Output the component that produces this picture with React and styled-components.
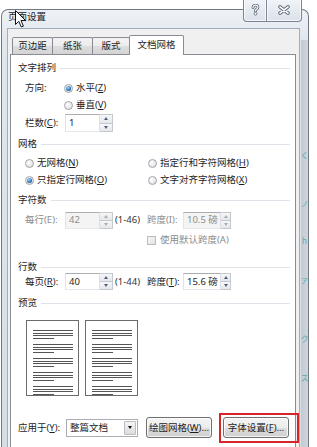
import React from 'react'
import styled, { createGlobalStyle } from 'styled-components'

const GlobalStyle = createGlobalStyle`
  html, body {
    margin: 0;
    padding: 0;
    background: #fff;
  }
  body {
    font-family: "Noto Sans", "Noto Sans CJK SC", sans-serif;
    font-size: 9.5px;
    line-height: 12px;
    color: #1e1e1e;
    overflow: hidden;
  }
`

const Screen = styled.div`
  position: relative;
  width: 317px;
  height: 447px;
  overflow: hidden;
  background: #fff;
  padding: 9px 0 0 1px;
  box-sizing: border-box;
`

const Window = styled.div`
  width: 308px;
  height: 460px;
  box-sizing: border-box;
  border: 1px solid #6e7884;
  border-bottom: none;
  border-radius: 7px 7px 0 0;
  background: linear-gradient(180deg, #eef2f6 0%, #e1e7ee 30px, #d6dde5 100%);
  padding: 0 8px 0 5px;
  display: flex;
  flex-direction: column;
`

const TitleBar = styled.div`
  height: 18px;
  box-sizing: border-box;
  padding: 1px 0 0 1px;
  color: #1b1b1b;
`

const Caption = styled.div`
  position: absolute;
  top: -1px;
  right: 15px;
  display: flex;
`

const CaptionButton = styled.div`
  width: ${p => p.$w}px;
  height: 23px;
  box-sizing: border-box;
  border: 1px solid #7b8591;
  border-top: none;
  margin-left: ${p => (p.$first ? 0 : -1)}px;
  border-radius: ${p => (p.$first ? '0 0 0 4px' : '0 0 4px 0')};
  background: linear-gradient(180deg, #f2f5f9 0%, #e6ebf1 50%, #dbe2ea 100%);
  box-shadow: inset 0 0 0 1px rgba(255, 255, 255, 0.7);
  display: flex;
  align-items: center;
  justify-content: center;
`

/* glass of the right frame lets the document behind show through */
const GlassEdge = styled.div`
  position: absolute;
  left: 301px;
  top: 40px;
  width: 7px;
  height: 407px;
  overflow: hidden;
  background: linear-gradient(90deg, #c4cad1, #cfd5db);
  display: flex;
  flex-direction: column;
  align-items: center;
  font-size: 8px;
  line-height: 9px;
  color: #4aa6a4;
`

const GlassMark = styled.span`
  margin-top: ${p => p.$mt}px;
  opacity: 0.85;
`

const Cursor = styled.svg`
  position: absolute;
  left: 15px;
  top: 10px;
`

const Client = styled.div`
  flex: 1;
  background: #f0f0f0;
  border: 1px solid #a3adb9;
  border-bottom: none;
  padding: 6px 3px 0 2px;
`

const TabRow = styled.div`
  height: 19px;
  display: flex;
  align-items: flex-end;
  padding-left: 3px;
`

const Tab = styled.div`
  position: relative;
  z-index: ${p => (p.$active ? 2 : 1)};
  width: ${p => p.$w}px;
  height: ${p => (p.$active ? 20 : 17)}px;
  margin-left: -1px;
  margin-bottom: ${p => (p.$active ? -1 : 0)}px;
  box-sizing: border-box;
  border: 1px solid #898c95;
  border-bottom: none;
  border-radius: 2px 2px 0 0;
  background: ${p =>
    p.$active
      ? '#fff'
      : 'linear-gradient(180deg, #f3f3f3 0%, #ececec 50%, #dedede 51%, #d3d3d3 100%)'};
  display: flex;
  align-items: center;
  justify-content: center;
  padding-bottom: ${p => (p.$active ? 2 : 0)}px;
  white-space: nowrap;
`

const Panel = styled.div`
  position: relative;
  height: 410px;
  box-sizing: border-box;
  background: #fff;
  border: 1px solid #898c95;
  padding: 7px 5px 0 7px;
`

const Header = styled.div`
  display: flex;
  align-items: center;
  height: 12px;
  margin-top: ${p => p.$mt || 0}px;
  white-space: nowrap;
  &::after {
    content: '';
    flex: 1;
    height: 1px;
    margin-left: 4px;
    background: #dde3e9;
  }
`

const Row = styled.div`
  display: flex;
  align-items: center;
  height: ${p => p.$h || 16}px;
  margin-top: ${p => p.$mt || 0}px;
  padding-left: ${p => p.$indent ?? 7}px;
  white-space: nowrap;
`

const Label = styled.span`
  flex: none;
  width: ${p => (p.$w ? `${p.$w}px` : 'auto')};
  color: ${p => (p.$disabled ? '#8c8c8c' : '#1e1e1e')};
`

const Key = styled.span`
  text-decoration: underline;
`

const Option = styled.span`
  flex: none;
  display: flex;
  align-items: center;
  gap: ${p => p.$gap ?? 3}px;
  width: ${p => (p.$w ? `${p.$w}px` : 'auto')};
  color: ${p => (p.$disabled ? '#8c8c8c' : '#1e1e1e')};
`

const RadioDot = styled.span`
  width: 9px;
  height: 9px;
  box-sizing: border-box;
  border-radius: 50%;
  border: 1px solid #a0a4aa;
  background: radial-gradient(circle at 35% 35%, #ffffff 0%, #e8e8e8 60%, #d0d0d0 100%);
  display: flex;
  align-items: center;
  justify-content: center;
  &::after {
    content: '';
    width: 5px;
    height: 5px;
    border-radius: 50%;
    background: ${p =>
      p.$on ? 'radial-gradient(circle at 40% 35%, #a8def8 0%, #2d76bf 55%, #173f72 100%)' : 'transparent'};
  }
`

const CheckBox = styled.span`
  width: 9px;
  height: 9px;
  box-sizing: border-box;
  border: 1px solid #b9bcc1;
  background: linear-gradient(135deg, #f6f6f6, #e4e4e4);
`

const SpinBox = styled.div`
  flex: none;
  display: flex;
  height: ${p => p.$h}px;
`

const Field = styled.div`
  width: ${p => p.$w}px;
  height: 100%;
  box-sizing: border-box;
  border: 1px solid;
  border-color: #abadb3 #dbdfe6 #e3e9ef #e2e3ea;
  background: ${p => (p.$disabled ? '#f4f4f4' : '#fff')};
  color: ${p => (p.$disabled ? '#8c8c8c' : '#1e1e1e')};
  padding-left: 3px;
  display: flex;
  align-items: center;
  overflow: hidden;
`

const Spinner = styled.div`
  width: ${p => p.$w}px;
  height: 100%;
  box-sizing: border-box;
  border: 1px solid #c4c8cf;
  border-left: none;
  display: flex;
  flex-direction: column;
`

const SpinHalf = styled.div`
  flex: 1;
  background: linear-gradient(180deg, #f7f7f7, #e5e7ea);
  display: flex;
  align-items: center;
  justify-content: center;
  & + & {
    border-top: 1px solid #c4c8cf;
  }
  &::after {
    content: '';
    border-left: 2.5px solid transparent;
    border-right: 2.5px solid transparent;
    ${p => (p.$down ? 'border-top' : 'border-bottom')}: 3px solid ${p => (p.$disabled ? '#a9adb3' : '#4b5f80')};
  }
`

const Range = styled.span`
  flex: none;
  width: ${p => p.$w}px;
  margin-left: 2px;
  color: #333;
`

const Pages = styled.div`
  display: flex;
  gap: 6px;
  margin: 11px 0 0 8px;
`

const Page = styled.div`
  width: 53px;
  height: 76px;
  box-sizing: border-box;
  border: 1px solid #6b6b6b;
  background: #fff;
  padding: 9px 5px 0 6px;
  overflow: hidden;
`

const Para = styled.div`
  margin-bottom: 5.5px;
`

const Line = styled.div`
  height: 1px;
  width: ${p => (p.$short ? '52%' : '100%')};
  margin-bottom: 1.5px;
  background: #555;
`

const Select = styled.div`
  flex: none;
  display: flex;
  width: 72px;
  height: 18px;
  box-sizing: border-box;
  border: 1px solid #abadb3;
  background: #fff;
`

const SelectText = styled.div`
  flex: 1;
  padding-left: 3px;
  display: flex;
  align-items: center;
`

const SelectButton = styled.div`
  width: 10px;
  margin: 1px;
  border: 1px solid #b9bdc4;
  border-radius: 1px;
  background: linear-gradient(180deg, #f5f5f5, #dcdcdc);
  display: flex;
  align-items: center;
  justify-content: center;
  &::after {
    content: '';
    border-left: 2.5px solid transparent;
    border-right: 2.5px solid transparent;
    border-top: 3px solid #111;
  }
`

const Button = styled.div`
  position: relative;
  flex: none;
  width: 66px;
  height: 21px;
  box-sizing: border-box;
  margin-left: ${p => p.$ml || 0}px;
  border: 1px solid #707070;
  border-radius: 3px;
  background: linear-gradient(180deg, #f4f4f4 0%, #ececec 50%, #dddddd 51%, #d0d0d0 100%);
  box-shadow: inset 0 0 0 1px rgba(255, 255, 255, 0.75);
  display: flex;
  align-items: center;
  justify-content: center;
  ${p =>
    p.$marked &&
    `&::after {
      content: '';
      position: absolute;
      left: -5px;
      right: -11px;
      top: -5px;
      bottom: -6px;
      border: 2px solid #d8252b;
    }`}
`

const Radio = ({ on, w, children }) => (
  <Option $w={w}>
    <RadioDot $on={on} />
    <span>{children}</span>
  </Option>
)

const Spin = ({ value, w, sw, h, disabled }) => (
  <SpinBox $h={h}>
    <Field $w={w} $disabled={disabled}>{value}</Field>
    <Spinner $w={sw}>
      <SpinHalf $disabled={disabled} />
      <SpinHalf $down $disabled={disabled} />
    </Spinner>
  </SpinBox>
)

const PreviewPage = () => (
  <Page>
    {[0, 1, 2, 3, 4].map(i => (
      <Para key={i}>
        <Line />
        <Line />
        <Line />
        <Line $short />
      </Para>
    ))}
  </Page>
)

const HelpGlyph = () => (
  <svg width="9" height="12" viewBox="0 0 9 12">
    <g fill="none" strokeLinecap="round">
      <path d="M2 3.6C2 2 3.1 1.2 4.5 1.2S7 2 7 3.3C7 4.5 6 5 5.2 5.5C4.7 5.8 4.5 6.2 4.5 7" stroke="#5a6573" strokeWidth="2.8" />
      <path d="M2 3.6C2 2 3.1 1.2 4.5 1.2S7 2 7 3.3C7 4.5 6 5 5.2 5.5C4.7 5.8 4.5 6.2 4.5 7" stroke="#fff" strokeWidth="1.2" />
    </g>
    <circle cx="4.5" cy="9.8" r="1.4" fill="#fff" stroke="#5a6573" strokeWidth="0.8" />
  </svg>
)

const CloseGlyph = () => (
  <svg width="12" height="10" viewBox="0 0 12 10">
    <g strokeLinecap="round">
      <path d="M2 1.8L10 8.2M10 1.8L2 8.2" stroke="#5a6573" strokeWidth="3.4" />
      <path d="M2 1.8L10 8.2M10 1.8L2 8.2" stroke="#fff" strokeWidth="1.6" />
    </g>
  </svg>
)

export default function App() {
  return (
    <>
      <GlobalStyle />
      <Screen>
        <Window>
          <TitleBar>页面设置</TitleBar>
          <Client>
            <TabRow>
              <Tab $w={41}>页边距</Tab>
              <Tab $w={41}>纸张</Tab>
              <Tab $w={38}>版式</Tab>
              <Tab $w={55} $active>文档网格</Tab>
            </TabRow>
            <Panel>
              <Header>文字排列</Header>
              <Row $mt={6}>
                <Label $w={39}>方向:</Label>
                <Radio on>水平(<Key>Z</Key>)</Radio>
              </Row>
              <Row $mt={1}>
                <Label $w={39} />
                <Radio>垂直(<Key>V</Key>)</Radio>
              </Row>
              <Row $mt={1} $h={18}>
                <Label $w={40}>栏数(<Key>C</Key>):</Label>
                <Spin value="1" w={35} sw={13} h={18} />
              </Row>

              <Header $mt={6}>网格</Header>
              <Row $mt={5}>
                <Radio w={123}>无网格(<Key>N</Key>)</Radio>
                <Radio>指定行和字符网格(<Key>H</Key>)</Radio>
              </Row>
              <Row $mt={1}>
                <Radio w={123} on>只指定行网格(<Key>O</Key>)</Radio>
                <Radio>文字对齐字符网格(<Key>X</Key>)</Radio>
              </Row>

              <Header $mt={6}>字符数</Header>
              <Row $mt={5} $h={18}>
                <Label $w={40} $disabled>每行(E):</Label>
                <Spin value="42" w={35} sw={13} h={17} disabled />
                <Range $w={32}>(1-46)</Range>
                <Label $w={36} $disabled>跨度(I):</Label>
                <Spin value="10.5 磅" w={38} sw={10} h={17} disabled />
              </Row>
              <Row $mt={4} $h={14} $indent={129}>
                <Option $gap={4} $disabled>
                  <CheckBox />
                  <span>使用默认跨度(A)</span>
                </Option>
              </Row>

              <Header $mt={14}>行数</Header>
              <Row $h={17}>
                <Label $w={40}>每页(<Key>R</Key>):</Label>
                <Spin value="40" w={35} sw={13} h={17} />
                <Range $w={32}>(1-44)</Range>
                <Label $w={36}>跨度(<Key>T</Key>):</Label>
                <Spin value="15.6 磅" w={38} sw={10} h={17} />
              </Row>

              <Header $mt={7}>预览</Header>
              <Pages>
                <PreviewPage />
                <PreviewPage />
              </Pages>

              <Row $mt={21} $h={21} $indent={0}>
                <Label $w={48}>应用于(<Key>Y</Key>):</Label>
                <Select>
                  <SelectText>整篇文档</SelectText>
                  <SelectButton />
                </Select>
                <Button $ml={8}>绘图网格(<Key>W</Key>)...</Button>
                <Button $ml={11} $marked>字体设置(<Key>F</Key>)...</Button>
              </Row>
            </Panel>
          </Client>
        </Window>

        <GlassEdge>
          <GlassMark $mt={110}>く</GlassMark>
          <GlassMark $mt={40}>ノ</GlassMark>
          <GlassMark $mt={28}>h</GlassMark>
          <GlassMark $mt={30}>ァ</GlassMark>
          <GlassMark $mt={50}>ク</GlassMark>
          <GlassMark $mt={30}>ス</GlassMark>
        </GlassEdge>

        <Caption>
          <CaptionButton $w={24} $first>
            <HelpGlyph />
          </CaptionButton>
          <CaptionButton $w={36}>
            <CloseGlyph />
          </CaptionButton>
        </Caption>

        <Cursor width="11" height="18" viewBox="0 0 11 18">
          <path d="M0.5 0.5V14.5L3.8 11.3L6.3 17L8.4 16.1L6 10.5H10.5Z" fill="#fff" stroke="#111" strokeWidth="1" strokeLinejoin="round" />
        </Cursor>
      </Screen>
    </>
  )
}
